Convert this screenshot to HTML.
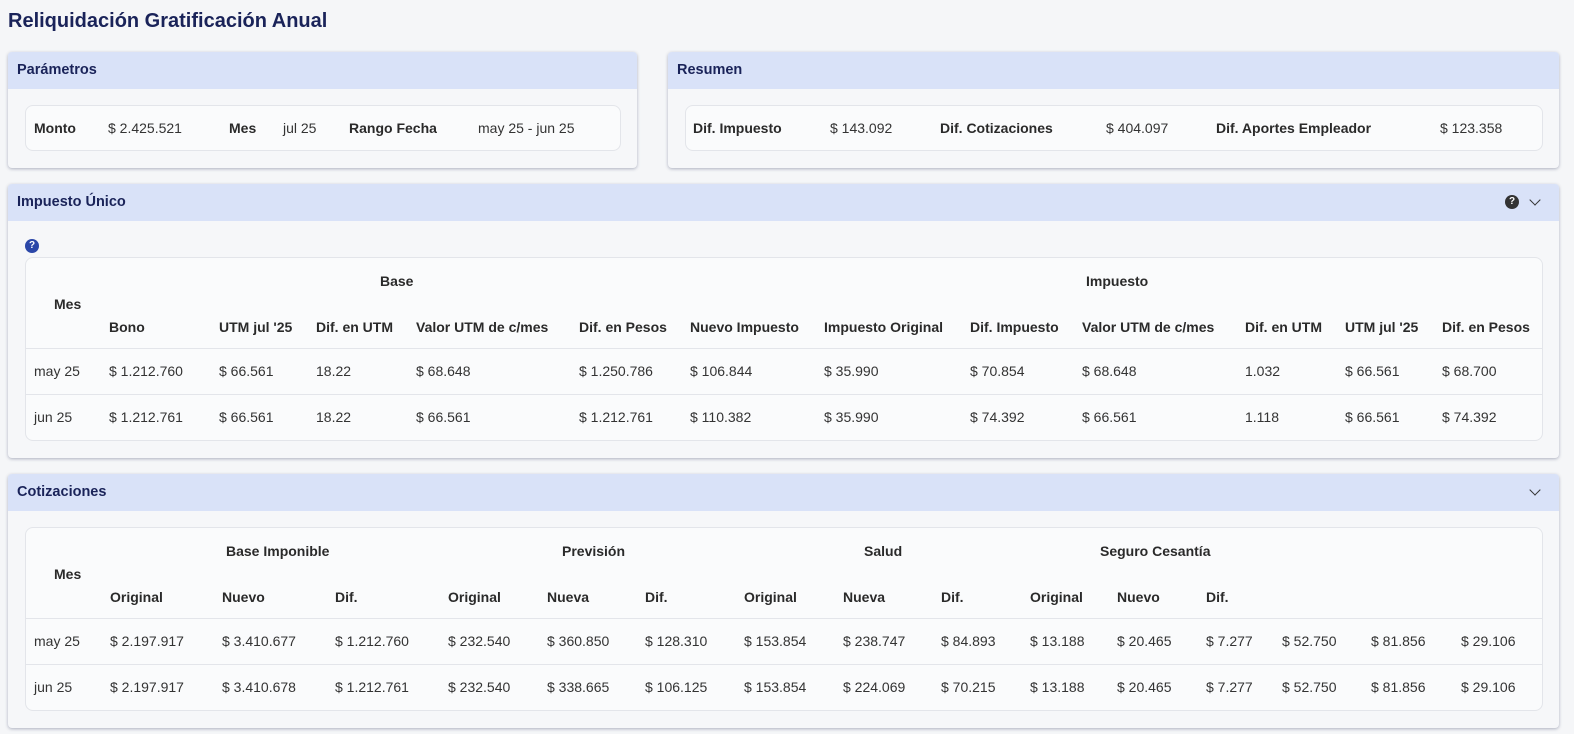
<!DOCTYPE html>
<html><head><meta charset="utf-8"><style>
body{margin:0;width:1574px;height:734px;background:#f5f6f8;font-family:"Liberation Sans",sans-serif;font-size:14px;color:#333;position:relative;overflow:hidden}
.a{position:absolute;white-space:nowrap;line-height:18px}
.b{font-weight:bold;color:#2a2a2a}
.panel{position:absolute;background:#f6f7f9;border-radius:4px;box-shadow:0 1px 3px rgba(40,50,90,.35)}
.hd{position:absolute;left:0;right:0;top:0;height:37px;background:#d9e2f8;border-radius:4px 4px 0 0}
.ht{position:absolute;left:9px;top:10px;font-weight:bold;color:#1a2359;font-size:14.5px}
.box{position:absolute;background:#fafbfc;border:1px solid #e3e5ea;border-radius:8px}
.ln{position:absolute;height:1px;background:#e3e5ea}
.q{position:absolute;width:14px;height:14px;border-radius:50%;color:#fff;font-size:10px;font-weight:bold;text-align:center;line-height:14px}
.chev{position:absolute;width:7px;height:7px;border-right:1.6px solid #333;border-bottom:1.6px solid #333;transform:rotate(45deg)}
</style></head><body>
<div class="a" style="left:8px;top:9px;font-size:20px;line-height:24px;font-weight:bold;color:#1a2359">Reliquidación Gratificación Anual</div>

<div class="panel" style="left:8px;top:52px;width:629px;height:116px"><div class="hd"></div><div class="ht">Parámetros</div>
<div class="box" style="left:17px;top:53px;width:594px;height:44px"></div></div>
<div class="a b" style="left:34px;top:119px">Monto</div>
<div class="a" style="left:108px;top:119px">$ 2.425.521</div>
<div class="a b" style="left:229px;top:119px">Mes</div>
<div class="a" style="left:283px;top:119px">jul 25</div>
<div class="a b" style="left:349px;top:119px">Rango Fecha</div>
<div class="a" style="left:478px;top:119px">may 25 - jun 25</div>

<div class="panel" style="left:668px;top:52px;width:891px;height:116px"><div class="hd"></div><div class="ht">Resumen</div>
<div class="box" style="left:17px;top:53px;width:856px;height:44px"></div></div>
<div class="a b" style="left:693px;top:119px">Dif. Impuesto</div>
<div class="a" style="left:830px;top:119px">$ 143.092</div>
<div class="a b" style="left:940px;top:119px">Dif. Cotizaciones</div>
<div class="a" style="left:1106px;top:119px">$ 404.097</div>
<div class="a b" style="left:1216px;top:119px">Dif. Aportes Empleador</div>
<div class="a" style="left:1440px;top:119px">$ 123.358</div>

<div class="panel" style="left:8px;top:184px;width:1551px;height:274px"><div class="hd"></div><div class="ht">Impuesto Único</div>
<div class="box" style="left:17px;top:73px;width:1516px;height:182px"></div></div>
<div class="q" style="left:1505px;top:195px;background:#333">?</div>
<div class="chev" style="left:1531px;top:196px"></div>
<div class="q" style="left:25px;top:239px;background:#2b47a8">?</div>
<div class="ln" style="left:26px;top:348px;width:1516px"></div>
<div class="ln" style="left:26px;top:394px;width:1516px"></div>
<div class="a b" style="left:380px;top:272px">Base</div>
<div class="a b" style="left:1086px;top:272px">Impuesto</div>
<div class="a b" style="left:54px;top:295px">Mes</div>
<div class="a b" style="left:109px;top:318px">Bono</div>
<div class="a b" style="left:219px;top:318px">UTM jul '25</div>
<div class="a b" style="left:316px;top:318px">Dif. en UTM</div>
<div class="a b" style="left:416px;top:318px">Valor UTM de c/mes</div>
<div class="a b" style="left:579px;top:318px">Dif. en Pesos</div>
<div class="a b" style="left:690px;top:318px">Nuevo Impuesto</div>
<div class="a b" style="left:824px;top:318px">Impuesto Original</div>
<div class="a b" style="left:970px;top:318px">Dif. Impuesto</div>
<div class="a b" style="left:1082px;top:318px">Valor UTM de c/mes</div>
<div class="a b" style="left:1245px;top:318px">Dif. en UTM</div>
<div class="a b" style="left:1345px;top:318px">UTM jul '25</div>
<div class="a b" style="left:1442px;top:318px">Dif. en Pesos</div>

<div class="a" style="left:34px;top:362px">may 25</div><div class="a" style="left:109px;top:362px">$ 1.212.760</div><div class="a" style="left:219px;top:362px">$ 66.561</div><div class="a" style="left:316px;top:362px">18.22</div><div class="a" style="left:416px;top:362px">$ 68.648</div><div class="a" style="left:579px;top:362px">$ 1.250.786</div><div class="a" style="left:690px;top:362px">$ 106.844</div><div class="a" style="left:824px;top:362px">$ 35.990</div><div class="a" style="left:970px;top:362px">$ 70.854</div><div class="a" style="left:1082px;top:362px">$ 68.648</div><div class="a" style="left:1245px;top:362px">1.032</div><div class="a" style="left:1345px;top:362px">$ 66.561</div><div class="a" style="left:1442px;top:362px">$ 68.700</div>
<div class="a" style="left:34px;top:408px">jun 25</div><div class="a" style="left:109px;top:408px">$ 1.212.761</div><div class="a" style="left:219px;top:408px">$ 66.561</div><div class="a" style="left:316px;top:408px">18.22</div><div class="a" style="left:416px;top:408px">$ 66.561</div><div class="a" style="left:579px;top:408px">$ 1.212.761</div><div class="a" style="left:690px;top:408px">$ 110.382</div><div class="a" style="left:824px;top:408px">$ 35.990</div><div class="a" style="left:970px;top:408px">$ 74.392</div><div class="a" style="left:1082px;top:408px">$ 66.561</div><div class="a" style="left:1245px;top:408px">1.118</div><div class="a" style="left:1345px;top:408px">$ 66.561</div><div class="a" style="left:1442px;top:408px">$ 74.392</div>

<div class="panel" style="left:8px;top:474px;width:1551px;height:254px"><div class="hd"></div><div class="ht">Cotizaciones</div>
<div class="box" style="left:17px;top:53px;width:1516px;height:182px"></div></div>
<div class="chev" style="left:1531px;top:486px"></div>
<div class="ln" style="left:26px;top:618px;width:1516px"></div>
<div class="ln" style="left:26px;top:664px;width:1516px"></div>
<div class="a b" style="left:226px;top:542px">Base Imponible</div>
<div class="a b" style="left:562px;top:542px">Previsión</div>
<div class="a b" style="left:864px;top:542px">Salud</div>
<div class="a b" style="left:1100px;top:542px">Seguro Cesantía</div>
<div class="a b" style="left:54px;top:565px">Mes</div>
<div class="a b" style="left:110px;top:588px">Original</div><div class="a b" style="left:222px;top:588px">Nuevo</div><div class="a b" style="left:335px;top:588px">Dif.</div><div class="a b" style="left:448px;top:588px">Original</div><div class="a b" style="left:547px;top:588px">Nueva</div><div class="a b" style="left:645px;top:588px">Dif.</div><div class="a b" style="left:744px;top:588px">Original</div><div class="a b" style="left:843px;top:588px">Nueva</div><div class="a b" style="left:941px;top:588px">Dif.</div><div class="a b" style="left:1030px;top:588px">Original</div><div class="a b" style="left:1117px;top:588px">Nuevo</div><div class="a b" style="left:1206px;top:588px">Dif.</div>

<div class="a" style="left:34px;top:632px">may 25</div><div class="a" style="left:110px;top:632px">$ 2.197.917</div><div class="a" style="left:222px;top:632px">$ 3.410.677</div><div class="a" style="left:335px;top:632px">$ 1.212.760</div><div class="a" style="left:448px;top:632px">$ 232.540</div><div class="a" style="left:547px;top:632px">$ 360.850</div><div class="a" style="left:645px;top:632px">$ 128.310</div><div class="a" style="left:744px;top:632px">$ 153.854</div><div class="a" style="left:843px;top:632px">$ 238.747</div><div class="a" style="left:941px;top:632px">$ 84.893</div><div class="a" style="left:1030px;top:632px">$ 13.188</div><div class="a" style="left:1117px;top:632px">$ 20.465</div><div class="a" style="left:1206px;top:632px">$ 7.277</div><div class="a" style="left:1282px;top:632px">$ 52.750</div><div class="a" style="left:1371px;top:632px">$ 81.856</div><div class="a" style="left:1461px;top:632px">$ 29.106</div>
<div class="a" style="left:34px;top:678px">jun 25</div><div class="a" style="left:110px;top:678px">$ 2.197.917</div><div class="a" style="left:222px;top:678px">$ 3.410.678</div><div class="a" style="left:335px;top:678px">$ 1.212.761</div><div class="a" style="left:448px;top:678px">$ 232.540</div><div class="a" style="left:547px;top:678px">$ 338.665</div><div class="a" style="left:645px;top:678px">$ 106.125</div><div class="a" style="left:744px;top:678px">$ 153.854</div><div class="a" style="left:843px;top:678px">$ 224.069</div><div class="a" style="left:941px;top:678px">$ 70.215</div><div class="a" style="left:1030px;top:678px">$ 13.188</div><div class="a" style="left:1117px;top:678px">$ 20.465</div><div class="a" style="left:1206px;top:678px">$ 7.277</div><div class="a" style="left:1282px;top:678px">$ 52.750</div><div class="a" style="left:1371px;top:678px">$ 81.856</div><div class="a" style="left:1461px;top:678px">$ 29.106</div>
</body></html>
